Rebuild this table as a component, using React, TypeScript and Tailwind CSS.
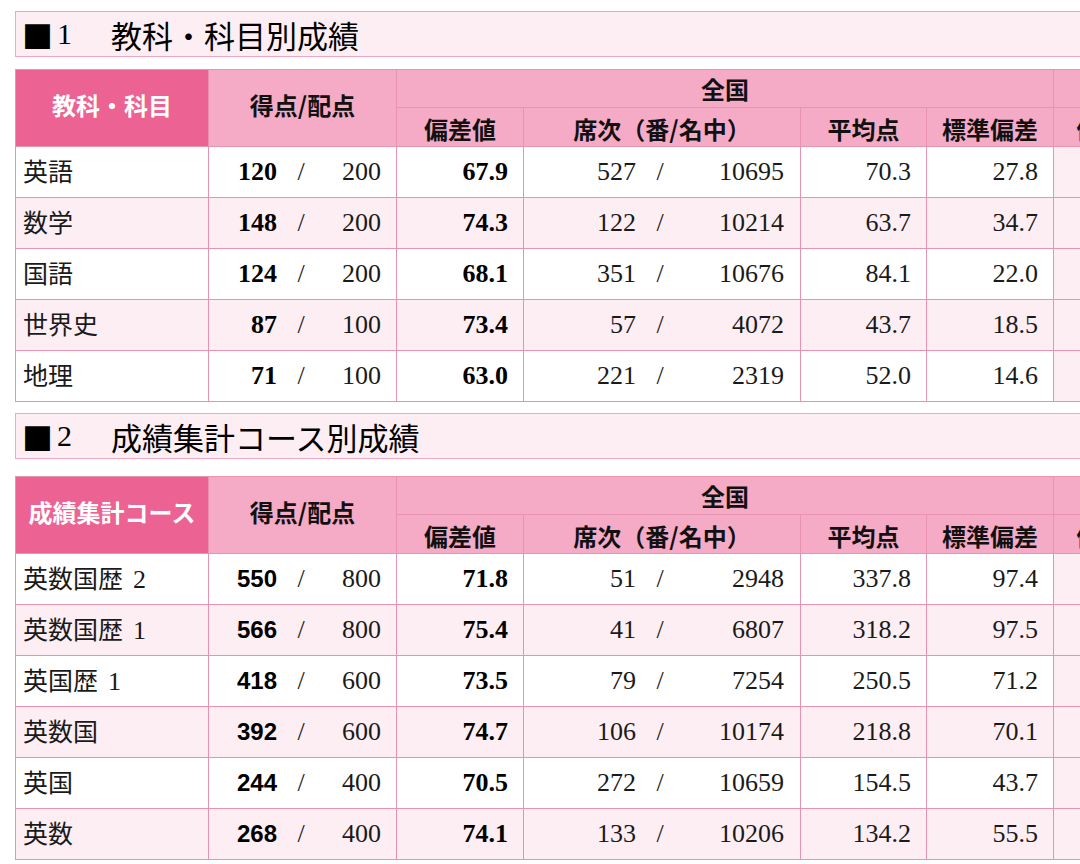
import React from 'react'

const font = "font-['Liberation_Serif','Noto_Sans_CJK_JP',serif]"
const gothic = "font-['Noto_Sans_CJK_JP','Liberation_Sans',sans-serif]"

type Row = {
  label: string
  score: string
  full: string
  dev: string
  rank: string
  total: string
  avg: string
  sd: string
}

const subjects: Row[] = [
  { label: '英語', score: '120', full: '200', dev: '67.9', rank: '527', total: '10695', avg: '70.3', sd: '27.8' },
  { label: '数学', score: '148', full: '200', dev: '74.3', rank: '122', total: '10214', avg: '63.7', sd: '34.7' },
  { label: '国語', score: '124', full: '200', dev: '68.1', rank: '351', total: '10676', avg: '84.1', sd: '22.0' },
  { label: '世界史', score: '87', full: '100', dev: '73.4', rank: '57', total: '4072', avg: '43.7', sd: '18.5' },
  { label: '地理', score: '71', full: '100', dev: '63.0', rank: '221', total: '2319', avg: '52.0', sd: '14.6' }
]

const courses: Row[] = [
  { label: '英数国歴 2', score: '550', full: '800', dev: '71.8', rank: '51', total: '2948', avg: '337.8', sd: '97.4' },
  { label: '英数国歴 1', score: '566', full: '800', dev: '75.4', rank: '41', total: '6807', avg: '318.2', sd: '97.5' },
  { label: '英国歴 1', score: '418', full: '600', dev: '73.5', rank: '79', total: '7254', avg: '250.5', sd: '71.2' },
  { label: '英数国', score: '392', full: '600', dev: '74.7', rank: '106', total: '10174', avg: '218.8', sd: '70.1' },
  { label: '英国', score: '244', full: '400', dev: '70.5', rank: '272', total: '10659', avg: '154.5', sd: '43.7' },
  { label: '英数', score: '268', full: '400', dev: '74.1', rank: '133', total: '10206', avg: '134.2', sd: '55.5' }
]

const SectionTitle = ({ num, text }: { num: string; text: string }) => (
  <div className="flex h-[46px] w-[1500px] items-center border border-[#f0a9c3] bg-[#fdeef3] pl-[6px]">
    <span className={`${gothic} text-[31px] leading-none text-black`}>■</span>
    <span className={`${font} ml-[4px] text-[30px] leading-none text-black`}>{num}</span>
    <span className={`${gothic} ml-[39px] text-[31px] leading-none text-black`}>{text}</span>
  </div>
)

const ScoreTable = ({ head, rows, boldSans }: { head: string; rows: Row[]; boldSans?: boolean }) => {
  const cell = 'border border-[#e993b3]'
  const th = `${cell} bg-[#f5aac5] ${gothic} text-[24px] font-bold text-[#111] leading-none`
  return (
    <table className="w-[1700px] table-fixed border-collapse">
      <colgroup>
        <col className="w-[193px]" />
        <col className="w-[188px]" />
        <col className="w-[127px]" />
        <col className="w-[277px]" />
        <col className="w-[126px]" />
        <col className="w-[127px]" />
        <col className="w-[118px]" />
        <col className="w-[277px]" />
        <col className="w-[126px]" />
        <col className="w-[141px]" />
      </colgroup>
      <thead>
        <tr className="h-[38px]">
          <th
            rowSpan={2}
            className={`${cell} bg-[#ec6292] ${gothic} whitespace-nowrap text-[24px] font-bold leading-none text-white`}
          >
            <div className="-mt-[6px]">{head}</div>
          </th>
          <th rowSpan={2} className={th}>
            <div className="-mt-[6px]">得点/配点</div>
          </th>
          <th colSpan={4} className={th}>全国</th>
          <th colSpan={4} className={th}></th>
        </tr>
        <tr className="h-[39px]">
          <th className={`${th} pt-[3px]`}>偏差値</th>
          <th className={`${th} pt-[3px]`}>席次（番/名中）</th>
          <th className={`${th} pt-[3px]`}>平均点</th>
          <th className={`${th} pt-[3px]`}>標準偏差</th>
          <th className={`${th} pt-[3px]`}>偏差値</th>
          <th className={`${th} pt-[3px]`}>席次（番/名中）</th>
          <th className={`${th} pt-[3px]`}>平均点</th>
          <th className={`${th} pt-[3px]`}>標準偏差</th>
        </tr>
      </thead>
      <tbody className={`${font} text-[26px] leading-none text-[#1a1a1a]`}>
        {rows.map((r, i) => (
          <tr key={r.label} className={`h-[51px] ${i % 2 === 1 ? 'bg-[#fdeef3]' : 'bg-white'}`}>
            <td className={`${cell} pl-[7px]`}>
              <span className={`${gothic} text-[25px]`}>{r.label.replace(/ \d/, '')}</span>
              {/ \d/.test(r.label) && <span className="ml-[10px]">{r.label.slice(-1)}</span>}
            </td>
            <td className={`${cell} pr-[15px]`}>
              <div className="flex items-baseline justify-end">
                <span
                  className={`w-[60px] text-right font-bold text-black ${
                    boldSans ? "font-['Liberation_Sans',sans-serif] text-[24px]" : ''
                  }`}
                >
                  {r.score}
                </span>
                <span className="w-[48px] text-center">/</span>
                <span className="w-[56px] text-right">{r.full}</span>
              </div>
            </td>
            <td className={`${cell} pr-[15px] text-right font-bold text-black`}>{r.dev}</td>
            <td className={`${cell} pr-[16px]`}>
              <div className="flex justify-end">
                <span className="w-[80px] text-right">{r.rank}</span>
                <span className="w-[48px] text-center">/</span>
                <span className="w-[100px] text-right">{r.total}</span>
              </div>
            </td>
            <td className={`${cell} pr-[15px] text-right`}>{r.avg}</td>
            <td className={`${cell} pr-[15px] text-right`}>{r.sd}</td>
            <td className={`${cell} bg-[#fdeef3]`}></td>
            <td className={`${cell} bg-[#fdeef3]`}></td>
            <td className={`${cell} bg-[#fdeef3]`}></td>
            <td className={`${cell} bg-[#fdeef3]`}></td>
          </tr>
        ))}
      </tbody>
    </table>
  )
}

export default function App() {
  return (
    <div className="h-[864px] w-[1080px] overflow-hidden bg-white">
      <div className="flex w-[1800px] flex-col pl-[15px] pt-[11px]">
        <SectionTitle num="1" text="教科・科目別成績" />
        <div className="mt-[12px]">
          <ScoreTable head="教科・科目" rows={subjects} />
        </div>
        <div className="mt-[11px]">
          <SectionTitle num="2" text="成績集計コース別成績" />
        </div>
        <div className="mt-[17px]">
          <ScoreTable head="成績集計コース" rows={courses} boldSans />
        </div>
      </div>
    </div>
  )
}
